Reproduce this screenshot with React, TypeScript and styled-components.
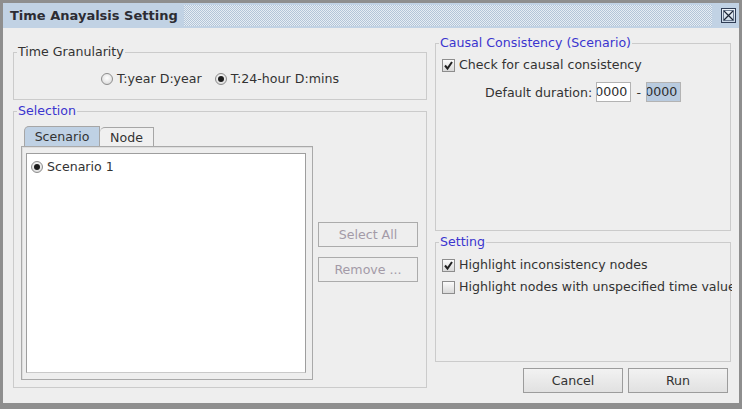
import React from 'react';
import styled, { createGlobalStyle } from 'styled-components';

const Global = createGlobalStyle`
  html, body { margin: 0; padding: 0; background: #ffffff; }
  body { font-family: "DejaVu Sans", Verdana, sans-serif; font-size: 12.6px; color: #333333; }
  * { box-sizing: border-box; }
`;

const Window = styled.div`
  width: 742px;
  height: 409px;
  border-style: solid;
  border-color: #8e8e8e;
  border-width: 3px 3px 6px 3px;
  display: flex;
  flex-direction: column;
  background: #eeeeee;
`;

const TitleBar = styled.div`
  height: 25px;
  flex: none;
  background: #c1d2e4;
  display: flex;
  align-items: center;
  padding: 0 3px 0 7px;
`;

const TitleText = styled.div`
  font-weight: bold;
  font-size: 13px;
  color: #2c2c33;
  white-space: nowrap;
`;

const Hatch = styled.div`
  flex: 1;
  align-self: stretch;
  margin: 2px 9px 2px 6px;
  background: repeating-conic-gradient(#b3c5d8 0% 25%, #e6edf4 0% 50%) 0 0 / 2px 2px;
`;

const CloseBtn = styled.div`
  width: 15px;
  height: 15px;
  flex: none;
  border: 1px solid #2f3d55;
  background: linear-gradient(#eef3f8, #c9d7e6);
  display: flex;
  align-items: center;
  justify-content: center;
`;

const Body = styled.div`
  flex: 1;
  display: grid;
  grid-template-columns: 414px 296px;
  column-gap: 8px;
  padding: 0 8px 0 10px;
  min-height: 0;
`;

const Column = styled.div<{ $top: number; $bottom: number }>`
  display: flex;
  flex-direction: column;
  padding-top: ${p => p.$top}px;
  padding-bottom: ${p => p.$bottom}px;
  min-height: 0;
`;

const Group = styled.fieldset<{ $grow?: boolean; $h?: number; $mt?: number }>`
  margin: ${p => p.$mt ?? 0}px 0 0 0;
  padding: 0;
  border: 1px solid #cbcbcb;
  min-width: 0;
  flex: ${p => (p.$grow ? '1' : 'none')};
  ${p => (p.$h ? `height: ${p.$h}px;` : '')}
  display: flex;
  flex-direction: column;
  min-height: 0;
`;

const Legend = styled.legend<{ $plain?: boolean }>`
  margin-left: 3px;
  padding: 0 1px;
  color: ${p => (p.$plain ? '#333333' : '#3b35cf')};
  line-height: 14px;
  white-space: nowrap;
`;

const GroupContent = styled.div<{ $pad: string }>`
  padding: ${p => p.$pad};
  display: flex;
  flex-direction: column;
  flex: 1;
  min-height: 0;
`;

const RadioRow = styled.div`
  display: flex;
  justify-content: center;
  align-items: center;
  gap: 13px;
  height: 16px;
`;

const Option = styled.label`
  display: flex;
  align-items: center;
  gap: 4px;
  white-space: nowrap;
  line-height: 16px;
`;

const Radio = styled.span<{ $on?: boolean }>`
  width: 12px;
  height: 12px;
  border-radius: 50%;
  flex: none;
  border: 1px solid #8d8d8d;
  background: radial-gradient(circle at 50% 40%, #ffffff 0%, #e8e8e8 55%, #cdcdcd 100%);
  display: inline-flex;
  align-items: center;
  justify-content: center;
  &::after {
    content: '';
    width: 6px;
    height: 6px;
    border-radius: 50%;
    background: #1c1c1c;
    display: ${p => (p.$on ? 'block' : 'none')};
  }
`;

const Check = styled.span`
  width: 13px;
  height: 13px;
  flex: none;
  border: 1px solid #8d8d8d;
  background: linear-gradient(#fbfbfb, #d9d9d9);
  display: inline-flex;
  align-items: center;
  justify-content: center;
`;

const SelRow = styled.div`
  display: flex;
  flex: 1;
  min-height: 0;
  gap: 5px;
`;

const TabArea = styled.div`
  width: 292px;
  display: flex;
  flex-direction: column;
  flex: none;
`;

const TabStrip = styled.div`
  display: flex;
  align-items: flex-end;
  padding-left: 3px;
  height: 20px;
  flex: none;
`;

const Tab = styled.div<{ $active?: boolean; $w: number }>`
  width: ${p => p.$w}px;
  height: ${p => (p.$active ? 20 : 19)}px;
  border: 1px solid #a6a6a6;
  border-bottom: none;
  border-top-left-radius: 5px;
  background: ${p => (p.$active ? '#bfd1e4' : '#f0f0f0')};
  display: flex;
  align-items: center;
  justify-content: center;
  color: #333;
  white-space: nowrap;
  & + & { border-left: none; }
`;

const TabPanel = styled.div`
  flex: 1;
  border: 1px solid #a9a9a9;
  box-shadow: inset 1px 1px 0 #dedede;
  padding: 6px 6px 6px 4px;
  display: flex;
  min-height: 0;
`;

const List = styled.div`
  flex: 1;
  background: #ffffff;
  border: 1px solid #9e9e9e;
  border-bottom-color: #c9c9c9;
  padding: 5px 0 0 4px;
`;

const ButtonCol = styled.div`
  width: 100px;
  display: flex;
  flex-direction: column;
  justify-content: center;
  gap: 10px;
  padding-bottom: 2px;
`;

const Button = styled.div<{ $disabled?: boolean }>`
  width: 100px;
  height: 25px;
  border: 1px solid ${p => (p.$disabled ? '#ababab' : '#9c9c9c')};
  background: ${p => (p.$disabled ? '#eeeeee' : 'linear-gradient(#f2f2f2, #e1e1e1)')};
  color: ${p => (p.$disabled ? '#a39aa7' : '#333333')};
  display: flex;
  align-items: center;
  justify-content: center;
  white-space: nowrap;
`;

const DurationRow = styled.div`
  display: flex;
  align-items: center;
  margin: 9px 0 0 43px;
  height: 20px;
`;

const DurationLabel = styled.span`
  margin-right: 4px;
  white-space: nowrap;
`;

const Field = styled.div<{ $sel?: boolean }>`
  width: 35px;
  height: 20px;
  border: 1px solid #b3b3b3;
  background: ${p => (p.$sel ? '#b9cbdf' : '#ffffff')};
  overflow: hidden;
  white-space: nowrap;
  line-height: 18px;
  text-indent: -2px;
  color: #2c2c2c;
`;

const Dash = styled.span`
  width: 15px;
  text-align: center;
`;

const ClipBox = styled.div`
  overflow: hidden;
  margin-right: -2px;
  display: flex;
  flex-direction: column;
  gap: 6px;
`;

const FooterRow = styled.div`
  display: flex;
  justify-content: flex-end;
  gap: 5px;
  margin-top: 6px;
  padding-right: 3px;
  flex: none;
`;

const CheckMark = () => (
  <svg width="11" height="11" viewBox="0 0 11 11">
    <path d="M2 5.5 L4.5 8.5 L9 2" fill="none" stroke="#222" strokeWidth="2" strokeLinejoin="miter" />
  </svg>
);

const CheckBox: React.FC<{ on?: boolean; children: React.ReactNode }> = ({ on, children }) => (
  <Option>
    <Check>{on && <CheckMark />}</Check>
    {children}
  </Option>
);

export default function App() {
  return (
    <>
      <Global />
      <Window>
        <TitleBar>
          <TitleText>Time Anayalsis Setting</TitleText>
          <Hatch />
          <CloseBtn>
            <svg width="13" height="13" viewBox="0 0 13 13">
              <rect x="1.5" y="1.5" width="10" height="10" fill="none" stroke="#6b7a90" strokeWidth="1" />
              <path d="M2 2 L11 11 M11 2 L2 11" stroke="#1d2636" strokeWidth="1.2" />
            </svg>
          </CloseBtn>
        </TitleBar>
        <Body>
          <Column $top={17} $bottom={15}>
            <Group>
              <Legend $plain>Time Granularity</Legend>
              <GroupContent $pad="12px 0 12px 0">
                <RadioRow>
                  <Option>
                    <Radio />
                    T:year D:year
                  </Option>
                  <Option>
                    <Radio $on />
                    T:24-hour D:mins
                  </Option>
                </RadioRow>
              </GroupContent>
            </Group>
            <Group $grow $mt={4}>
              <Legend>Selection</Legend>
              <GroupContent $pad="8px 0 7px 7px">
                <SelRow>
                  <TabArea>
                    <TabStrip>
                      <Tab $active $w={76}>Scenario</Tab>
                      <Tab $w={54}>Node</Tab>
                    </TabStrip>
                    <TabPanel>
                      <List>
                        <Option>
                          <Radio $on />
                          Scenario 1
                        </Option>
                      </List>
                    </TabPanel>
                  </TabArea>
                  <ButtonCol>
                    <Button $disabled>Select All</Button>
                    <Button $disabled>Remove ...</Button>
                  </ButtonCol>
                </SelRow>
              </GroupContent>
            </Group>
          </Column>
          <Column $top={8} $bottom={10}>
            <Group $grow>
              <Legend>Causal Consistency (Scenario)</Legend>
              <GroupContent $pad="7px 0 0 6px">
                <CheckBox on>Check for causal consistency</CheckBox>
                <DurationRow>
                  <DurationLabel>Default duration:</DurationLabel>
                  <Field>0000</Field>
                  <Dash>-</Dash>
                  <Field $sel>0000</Field>
                </DurationRow>
              </GroupContent>
            </Group>
            <Group $h={127} $mt={4}>
              <Legend>Setting</Legend>
              <GroupContent $pad="8px 0 0 6px">
                <ClipBox>
                  <CheckBox on>Highlight inconsistency nodes</CheckBox>
                  <CheckBox>Highlight nodes with unspecified time values</CheckBox>
                </ClipBox>
              </GroupContent>
            </Group>
            <FooterRow>
              <Button>Cancel</Button>
              <Button>Run</Button>
            </FooterRow>
          </Column>
        </Body>
      </Window>
    </>
  );
}
